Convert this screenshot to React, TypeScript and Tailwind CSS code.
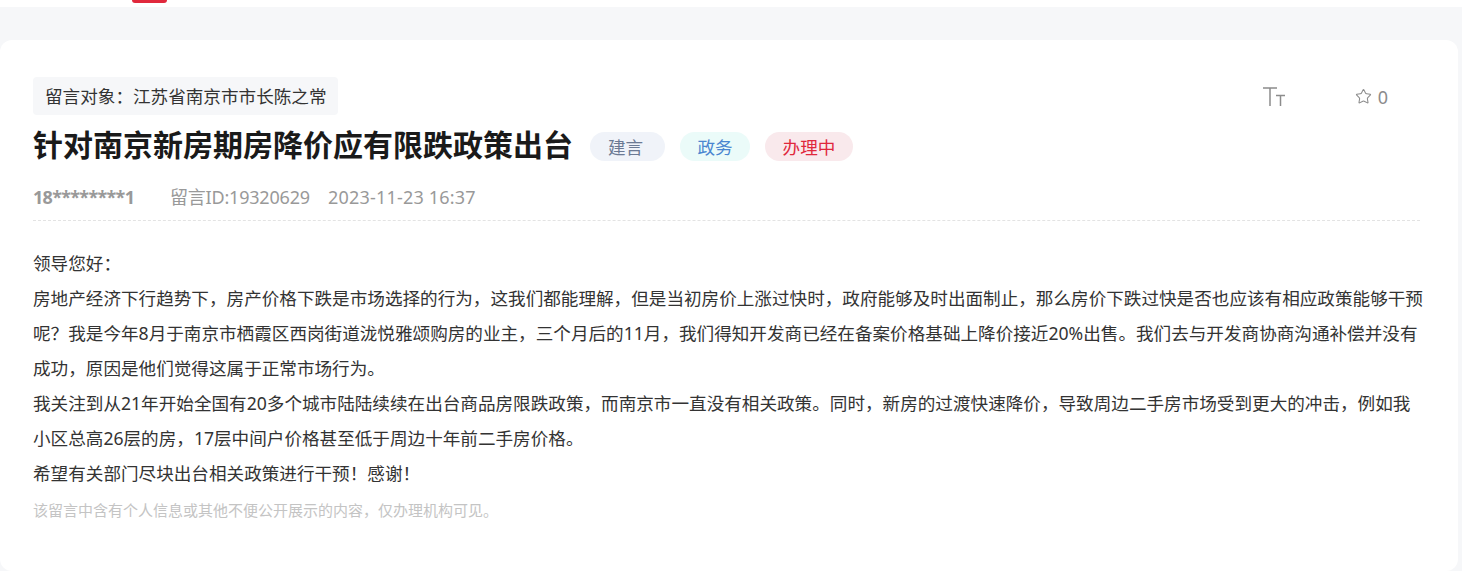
import { Star } from "lucide-react";

const font = { fontFamily: '"Noto Sans", "Noto Sans CJK SC", sans-serif' };

export default function App() {
  return (
    <div style={font} className="h-[571px] overflow-hidden bg-white">
      {/* top nav leftover */}
      <div className="h-[7px] bg-white pl-[132px]">
        <div className="h-[3px] w-[35px] rounded-b-sm bg-[#e0283c]" />
      </div>

      <div className="h-[564px] bg-[#f6f7f9] pt-[33px] pr-[4px]">
        <div className="h-[531px] rounded-xl bg-white pt-[37px] pl-[33px] pr-[38px]">
          <div className="flex items-start justify-between">
            <div className="flex h-[38px] w-[305px] items-center rounded bg-[#f6f7f9] pl-[12px] text-[17.6px] text-[#333]">
              留言对象：江苏省南京市市长陈之常
            </div>
            <div className="mr-[32px] mt-[10px] flex items-center text-[#8c8c8c]">
              <svg width="22" height="19" viewBox="0 0 22 19" fill="none" stroke="#8c8c8c" strokeWidth="1.5">
                <path d="M0 1H14M7 1V19" />
                <path d="M13 8.5H22M17.5 8.5V19" />
              </svg>
              <div className="ml-[70px] flex items-center gap-[6px] text-[18px] leading-none">
                <Star className="h-[17px] w-[17px]" strokeWidth={1.5} />
                <span>0</span>
              </div>
            </div>
          </div>

          <div className="mt-[10px] flex items-center">
            <h1 className="text-[30px] font-bold leading-[40px] text-[#1a1a1a]">针对南京新房期房降价应有限跌政策出台</h1>
            <div className="ml-[17px] mt-[3px] flex items-center gap-[15px] text-[17.6px]">
              <span className="flex h-[29px] w-[75px] items-center justify-center rounded-full bg-[#f0f3f9] pr-[4px] pt-[2px] text-[#6c7a94]">建言</span>
              <span className="flex h-[29px] w-[70px] items-center justify-center rounded-full bg-[#ebfbf9] pt-[2px] text-[#4a86d0]">政务</span>
              <span className="flex h-[29px] w-[88px] items-center justify-center rounded-full bg-[#f9e9ec] pt-[2px] text-[#e0283c]">办理中</span>
            </div>
          </div>

          <div className="mt-[12px] flex h-[44px] items-center border-b border-dashed border-[#e3e3e3] pb-[3px] text-[18px] text-[#999]">
            <span className="w-[137px] font-bold tracking-[-0.7px]">18********1</span>
            <span className="w-[158px] tracking-[-0.2px]">留言ID:19320629</span>
            <span className="tracking-[0.2px]">2023-11-23 16:37</span>
          </div>

          <div className="mr-[-5px] mt-[25px] text-[17.6px] leading-[35px] text-[#333]">
            <p>领导您好：</p>
            <p>房地产经济下行趋势下，房产价格下跌是市场选择的行为，这我们都能理解，但是当初房价上涨过快时，政府能够及时出面制止，那么房价下跌过快是否也应该有相应政策能够干预呢？我是今年8月于南京市栖霞区西岗街道泷悦雅颂购房的业主，三个月后的11月，我们得知开发商已经在备案价格基础上降价接近20%出售。我们去与开发商协商沟通补偿并没有成功，原因是他们觉得这属于正常市场行为。</p>
            <p>我关注到从21年开始全国有20多个城市陆陆续续在出台商品房限跌政策，而南京市一直没有相关政策。同时，新房的过渡快速降价，导致周边二手房市场受到更大的冲击，例如我小区总高26层的房，17层中间户价格甚至低于周边十年前二手房价格。</p>
            <p>希望有关部门尽块出台相关政策进行干预！感谢！</p>
          </div>
          <p className="mt-[9px] text-[15px] leading-[20px] text-[#c4c4c4]">该留言中含有个人信息或其他不便公开展示的内容，仅办理机构可见。</p>
        </div>
      </div>
    </div>
  );
}
